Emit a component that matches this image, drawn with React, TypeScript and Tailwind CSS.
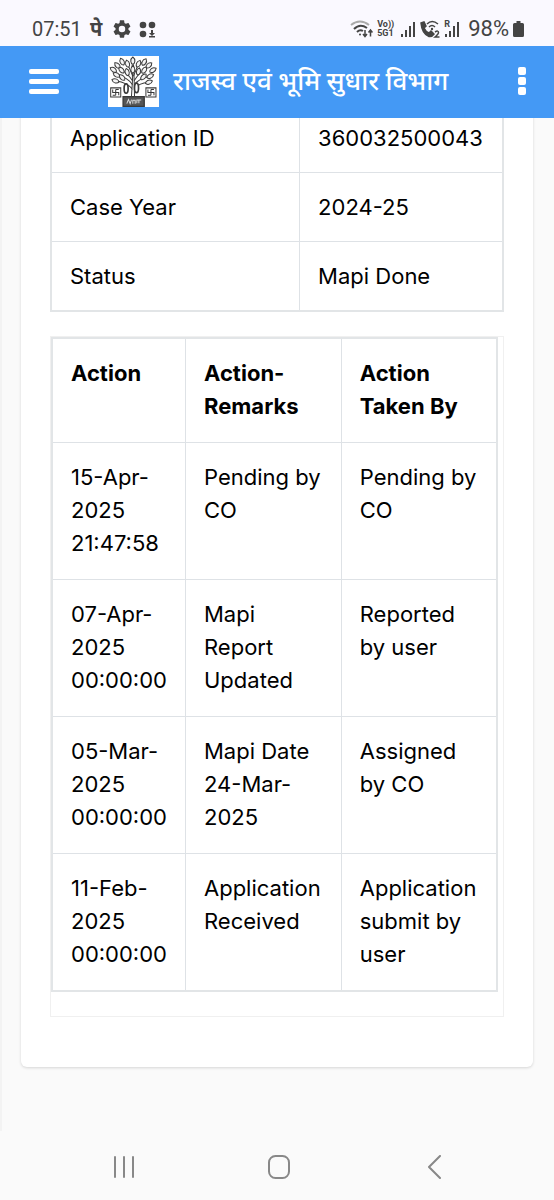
import React from 'react';

const details = [
    { label: 'Application ID', value: '360032500043' },
    { label: 'Case Year', value: '2024-25' },
    { label: 'Status', value: 'Mapi Done' },
];

const actions = [
    { date: '15-Apr-2025 21:47:58', remarks: 'Pending by CO', by: 'Pending by CO' },
    { date: '07-Apr-2025 00:00:00', remarks: 'Mapi Report Updated', by: 'Reported by user' },
    { date: '05-Mar-2025 00:00:00', remarks: 'Mapi Date 24-Mar-2025', by: 'Assigned by CO' },
    { date: '11-Feb-2025 00:00:00', remarks: 'Application Received', by: 'Application submit by user' },
];

// x, y, rotation of each leaf
const leaves = [
    [74, 14, 0], [58, 23, -15], [91, 23, 25], [42, 17, -25], [108, 18, 30],
    [28, 28, -45], [122, 28, 50], [16, 41, -55], [134, 42, 60],
    [40, 42, -40], [108, 42, 35], [57, 48, -15], [91, 46, 15],
    [74, 40, 0], [25, 56, -60], [126, 60, 65], [22, 74, -70], [122, 78, 70],
    [42, 64, -45], [106, 62, 45],
];

const Logo: React.FC = () => (
    <svg className="h-[51px] w-[51px] shrink-0 bg-white" viewBox="0 0 152 152" fill="none" stroke="#3a3a3a" strokeWidth={3}>
        <path d="M70 119L73 72L72 25M79 119L78 72L76 25M73 100Q60 80 22 74M78 100Q90 80 122 78" />
        <path d="M73 86Q60 64 25 56M78 86Q92 66 126 60M73 74Q58 50 40 42L28 28M78 74Q92 50 108 42L122 28M74 60L58 23M76 60L91 23L108 18" />
        {leaves.map(([x, y, r], i) => (
            <path
                key={i}
                d="M0 -11Q7 -6 6 2Q5 9 0 11Q-5 9 -6 2Q-7 -6 0 -11Z"
                fill="#f4f4f4"
                transform={`translate(${x} ${y}) rotate(${r})`}
            />
        ))}
        <ellipse cx={54} cy={97} rx={6} ry={14} strokeWidth={5} fill="#fff" />
        <ellipse cx={85} cy={95} rx={6} ry={14} strokeWidth={5} fill="#fff" />
        <g strokeWidth={3}>
            <path d="M8 95H38V122H8Z M14 100V109H32V117 M23 100H32 M23 100V117 M14 117H23" />
            <path d="M113 95H143V122H113Z M119 100V109H137V117 M128 100H137 M128 100V117 M119 117H128" />
        </g>
        <path d="M45 121H108V150H45Z" fill="#555" strokeWidth={4} />
        <path d="M56 142L61 130L66 142L70 130M74 142V132H81V142M86 141V131H99M92 131V141" stroke="#ddd" />
    </svg>
);

const StatusBar: React.FC = () => (
    <div className="flex h-[46px] items-center justify-between bg-[#faf9ff] pt-3 pr-[30px] pl-8 text-[#444]">
        <div className="flex items-center">
            <span className="w-[58px] text-xl leading-6">07:51</span>
            <span className="w-[23px] text-xl leading-6 font-bold">पे</span>
            <svg className="mr-2 h-[18px] w-[18px]" viewBox="2 2 20 20" fill="currentColor">
                <path d="M19.14 12.94c.04-.3.06-.61.06-.94s-.02-.64-.07-.94l2.03-1.58c.18-.14.23-.41.12-.61l-1.92-3.32c-.12-.22-.37-.29-.59-.22l-2.39.96c-.5-.38-1.03-.7-1.62-.94l-.36-2.54c-.04-.24-.24-.41-.48-.41h-3.84c-.24 0-.43.17-.47.41l-.36 2.54c-.59.24-1.13.57-1.62.94l-2.39-.96c-.22-.08-.47 0-.59.22L2.74 8.87c-.12.21-.08.47.12.61l2.03 1.58c-.05.3-.09.63-.09.94s.02.64.07.94l-2.03 1.58c-.18.14-.23.41-.12.61l1.92 3.32c.12.22.37.29.59.22l2.39-.96c.5.38 1.03.7 1.62.94l.36 2.54c.05.24.24.41.48.41h3.84c.24 0 .44-.17.47-.41l.36-2.54c.59-.24 1.13-.56 1.62-.94l2.39.96c.22.08.47 0 .59-.22l1.92-3.32c.12-.22.07-.47-.12-.61zM12 15.6A3.6 3.6 0 1 1 12 8.4a3.6 3.6 0 0 1 0 7.2z" />
            </svg>
            <svg className="h-[17px] w-[17px]" viewBox="0 0 17 17" fill="currentColor">
                <circle cx="4" cy="4" r="3.3" />
                <circle cx="13" cy="4" r="3.3" />
                <circle cx="4" cy="13" r="3.3" />
                <path d="M12 9h2v3h2l-3 3-3-3h2zM10 15h6v1.5h-6z" />
            </svg>
        </div>
        <div className="flex items-center">
            <svg className="mr-1 h-[18px] w-[23px]" viewBox="0 0 23 18" fill="none" stroke="currentColor" strokeWidth={2}>
                <path d="M1 5Q10-2 19 5" stroke="#aaa" />
                <path d="M4 9Q10 3 17 8M7 12Q10 9 13 11" />
                <circle cx="10" cy="14.5" r="1" fill="currentColor" stroke="none" />
                <path d="M15 10V16M13 14L15 16.5L17 14M20.5 16.5V11M18.5 12.5L20.5 10L22.5 12.5" strokeWidth={1.5} />
            </svg>
            <span className="mr-1.5 w-[17px] text-[9px] leading-[9px] font-bold whitespace-nowrap">Vo))<br />5G1</span>
            <svg className="mr-1 h-[18px] w-4" viewBox="0 0 16 18" fill="none" stroke="currentColor" strokeWidth={2}>
                <path d="M2 14V17M6 10V17M10 6V17M14 2V17" />
            </svg>
            <svg className="mr-1 h-[18px] w-5" viewBox="0 0 20 18" fill="none" stroke="currentColor" strokeWidth={1.5}>
                <path d="M1 3L4 2L6 6L4 8Q6 12 9 13L11 11L14 14Q12 17 9 16.5Q2 14 1 3Z" fill="currentColor" />
                <path d="M7 4Q12-1 18 4M9 7Q12 4 15 7" />
                <circle cx="12" cy="9" r="1.2" fill="currentColor" stroke="none" />
                <path d="M15 12Q18.5 10 18.5 12.5Q18.5 14 15 17H19.5" />
            </svg>
            <span className="relative mr-2 flex">
                <span className="absolute top-0 left-0 text-[9px] leading-[9px] font-bold">R</span>
                <svg className="h-[18px] w-4" viewBox="0 0 16 18" fill="none" stroke="currentColor" strokeWidth={2}>
                    <path d="M2 14V17M6 11V17M10 6V17M14 2V17" />
                </svg>
            </span>
            <span className="text-[22px] leading-6">98%</span>
            <svg className="ml-1 h-4 w-[11px]" viewBox="0 0 11 16" fill="currentColor">
                <path d="M3.5 0h4v2H9.5Q11 2 11 3.5V14.5Q11 16 9.5 16H1.5Q0 16 0 14.5V3.5Q0 2 1.5 2h2z" />
            </svg>
        </div>
    </div>
);

const App: React.FC = () => {
    return (
        <div className="flex min-h-screen flex-col bg-[#fafafa] font-['Inter','Noto_Sans',sans-serif] text-black">
            <div className="sticky top-0 z-10 font-['Roboto','Noto_Sans',sans-serif]">
                <StatusBar />
                <header className="flex h-[72px] items-center bg-[#4499f5] pr-7 pb-0.5 pl-[29px] text-white">
                    <button type="button" aria-label="Menu" className="mr-[49px] flex w-[30px] flex-col gap-[5px]">
                        <span className="h-[5px] w-full rounded-xs bg-white" />
                        <span className="h-[5px] w-full rounded-xs bg-white" />
                        <span className="h-[5px] w-full rounded-xs bg-white" />
                    </button>
                    <Logo />
                    <h1 className="ml-3.5 flex-1 text-[26px] leading-9 font-medium whitespace-nowrap">राजस्व एवं भूमि सुधार विभाग</h1>
                    <button type="button" aria-label="More options" className="flex flex-col gap-0.5">
                        <span className="h-2 w-2 rounded-xs bg-white" />
                        <span className="h-2 w-2 rounded-xs bg-white" />
                        <span className="h-2 w-2 rounded-xs bg-white" />
                    </button>
                </header>
            </div>

            <main className="flex-1 border-l-2 border-[#f3f3f3] pr-[21px] pb-16 pl-[19px]">
                <section className="-mt-4 rounded-md bg-white px-[29px] pb-[50px] shadow-[0_1px_3px_rgba(0,0,0,0.15)]">
                    {/* Case details */}
                    <table className="w-full table-fixed border-collapse border-2 border-[#e2e5e7] text-[22px] leading-[33px]">
                        <tbody>
                            {details.map((row) => (
                                <tr key={row.label}>
                                    <th scope="row" className="w-[55%] border border-[#dee2e6] px-[18px] pt-[18px] pb-[17px] text-left font-normal">{row.label}</th>
                                    <td className="border border-[#dee2e6] px-[18px] pt-[18px] pb-[17px] whitespace-nowrap">{row.value}</td>
                                </tr>
                            ))}
                        </tbody>
                    </table>

                    {/* Action history */}
                    <div className="mt-6 border border-[#f0f0f0] pr-[5px] pb-6">
                        <table className="w-full table-fixed border-collapse border-2 border-[#e2e5e7] text-[22px] leading-[33px]">
                            <thead>
                                <tr className="text-left align-top">
                                    <th scope="col" className="w-[30%] border border-[#dee2e6] px-[18px] pt-[18px] pb-[19px]">Action</th>
                                    <th scope="col" className="w-[35%] border border-[#dee2e6] px-[18px] pt-[18px] pb-[19px]">Action-Remarks</th>
                                    <th scope="col" className="w-[35%] border border-[#dee2e6] px-[18px] pt-[18px] pb-[19px]">Action Taken By</th>
                                </tr>
                            </thead>
                            <tbody>
                                {actions.map((row) => (
                                    <tr key={row.date} className="align-top">
                                        <td className="border border-[#dee2e6] px-[18px] pt-[18px] pb-[19px]">{row.date}</td>
                                        <td className="border border-[#dee2e6] px-[18px] pt-[18px] pb-[19px]">{row.remarks}</td>
                                        <td className="border border-[#dee2e6] px-[18px] pt-[18px] pb-[19px]">{row.by}</td>
                                    </tr>
                                ))}
                            </tbody>
                        </table>
                    </div>
                </section>
            </main>

            <nav className="flex h-[69px] items-center justify-around pt-0.5 pr-[42px] pl-12 text-[#888]">
                <button type="button" aria-label="Recent apps">
                    <svg className="h-6 w-6" viewBox="0 0 24 24" fill="none" stroke="currentColor" strokeWidth={2} strokeLinecap="round">
                        <path d="M2 2V22M11 2V22M20 2V22" />
                    </svg>
                </button>
                <button type="button" aria-label="Home">
                    <svg className="h-6 w-6" viewBox="0 0 24 24" fill="none" stroke="currentColor" strokeWidth={2}>
                        <rect x="1" y="1" width="20" height="22" rx="6.5" />
                    </svg>
                </button>
                <button type="button" aria-label="Back">
                    <svg className="h-6 w-6" viewBox="0 0 24 24" fill="none" stroke="currentColor" strokeWidth={2} strokeLinecap="round" strokeLinejoin="round">
                        <path d="M17 1L6 12L17 23" />
                    </svg>
                </button>
            </nav>
        </div>
    );
};

export default App;
